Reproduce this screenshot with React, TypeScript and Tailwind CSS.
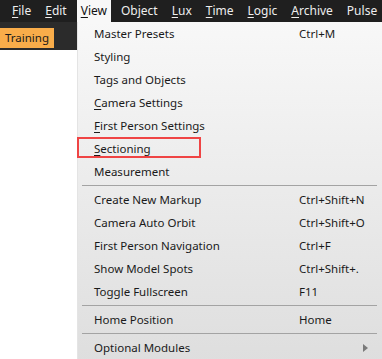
import React from 'react'

type Item = { label: string; u?: number; shortcut?: string; sub?: boolean; mark?: boolean }
type Entry = Item | 'sep'

const bar: { label: string; u?: number; open?: boolean }[] = [
  { label: 'File', u: 0 },
  { label: 'Edit', u: 0 },
  { label: 'View', u: 0, open: true },
  { label: 'Object' },
  { label: 'Lux', u: 0 },
  { label: 'Time', u: 0 },
  { label: 'Logic', u: 0 },
  { label: 'Archive', u: 0 },
  { label: 'Pulse' },
]

const menu: Entry[] = [
  { label: 'Master Presets', shortcut: 'Ctrl+M' },
  { label: 'Styling' },
  { label: 'Tags and Objects' },
  { label: 'Camera Settings', u: 0 },
  { label: 'First Person Settings', u: 0 },
  { label: 'Sectioning', u: 0, mark: true },
  { label: 'Measurement' },
  'sep',
  { label: 'Create New Markup', shortcut: 'Ctrl+Shift+N' },
  { label: 'Camera Auto Orbit', shortcut: 'Ctrl+Shift+O' },
  { label: 'First Person Navigation', shortcut: 'Ctrl+F' },
  { label: 'Show Model Spots', shortcut: 'Ctrl+Shift+.' },
  { label: 'Toggle Fullscreen', shortcut: 'F11' },
  'sep',
  { label: 'Home Position', shortcut: 'Home' },
  'sep',
  { label: 'Optional Modules', sub: true },
]

function Mnemonic({ text, u }: { text: string; u?: number }) {
  if (u === undefined) return <>{text}</>
  return (
    <>
      {text.slice(0, u)}
      <span className="underline underline-offset-2">{text[u]}</span>
      {text.slice(u + 1)}
    </>
  )
}

export default function App() {
  return (
    <div className="relative w-[382px] h-[359px] overflow-hidden bg-white text-[11.5px] font-['Noto_Sans',sans-serif]">
      <div className="flex h-[22px] items-center bg-[#1f1f1f] pl-[8px] gap-[6px] text-[#eeeeee] text-[12px]">
        {bar.map((b) => (
          <div
            key={b.label}
            className={
              b.open
                ? 'h-full flex items-center px-[4px] bg-[#f8f8f8] text-[#111]'
                : 'h-full flex items-center px-[4px] whitespace-nowrap'
            }
          >
            <Mnemonic text={b.label} u={b.u} />
          </div>
        ))}
      </div>
      <div className="h-[28px] bg-[#2b2b2b] pt-[6px]">
        <div className="w-[54px] h-[20px] bg-[#f9ad4a] text-[#1a1a1a] flex items-center justify-center">Training</div>
      </div>

      <div className="absolute left-[77px] top-[22px] w-[320px] h-[340px] bg-gradient-to-b from-[#f8f8f8] to-[#dedede] text-[#1a1a1a] border-l border-[#e4e4e4]">
        {menu.map((m, i) =>
          m === 'sep' ? (
            <div key={i} className="h-[5px] flex items-center pl-[4px] pr-[20px]">
              <div className="h-px w-full bg-[#a3a3a3]" />
            </div>
          ) : (
            <div key={i} className="relative h-[23px] flex items-center pl-[16px]">
              <span className="w-[205px]">
                <Mnemonic text={m.label} u={m.u} />
              </span>
              {m.shortcut && <span>{m.shortcut}</span>}
              {m.sub && (
                <svg className="ml-[64px]" width="5" height="8" viewBox="0 0 5 8">
                  <path d="M0 0 L5 4 L0 8 Z" fill="#7a7a7a" />
                </svg>
              )}
              {m.mark && (
                <div className="absolute left-[-1px] top-[0px] w-[124px] h-[21px] border-2 border-[#ef4444]" />
              )}
            </div>
          ),
        )}
      </div>
    </div>
  )
}
